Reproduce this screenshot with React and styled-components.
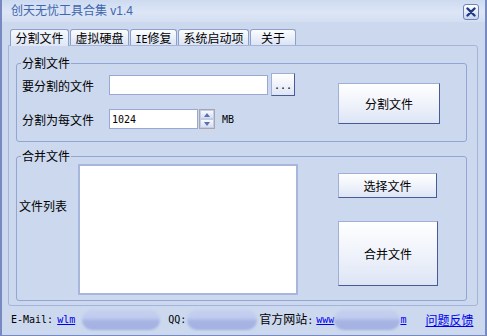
import React from 'react';
import styled, { createGlobalStyle } from 'styled-components';

const GlobalStyle = createGlobalStyle`
  html, body {
    margin: 0;
    padding: 0;
    background: #cbd8ee;
  }
  body {
    font-family: "Noto Sans CJK SC", "Liberation Sans", sans-serif;
    font-size: 12px;
    color: #000;
  }
  * {
    box-sizing: border-box;
  }
`;

const MONO = `"DejaVu Sans Mono", "Liberation Mono", "Noto Sans CJK SC", monospace`;

const Window = styled.div`
  width: 487px;
  height: 336px;
  display: flex;
  flex-direction: column;
  background: #cbd8ee;
  border-left: 2px solid #7689c0;
  border-right: 2px solid #7689c0;
  border-bottom: 1px solid #7689c0;
`;

const TitleBar = styled.div`
  height: 22px;
  display: flex;
  align-items: center;
  justify-content: space-between;
  padding: 0 6px 0 9px;
  background: linear-gradient(to bottom, #cddaf0 0%, #dde6f6 55%, #d3def2 100%);
`;

const Title = styled.div`
  font-family: "Liberation Sans", "Noto Sans CJK SC", sans-serif;
  font-size: 12px;
  line-height: 14px;
  color: #4066ae;
`;

const CloseButton = styled.button`
  width: 16px;
  height: 16px;
  padding: 0;
  margin-top: 2px;
  display: flex;
  align-items: center;
  justify-content: center;
  border: 1px solid #6f82b8;
  border-radius: 3px;
  background: linear-gradient(to bottom, #ffffff 0%, #e4eaf7 50%, #c9d5ee 100%);
`;

const TabStrip = styled.div`
  display: flex;
  align-items: flex-end;
  gap: 1px;
  height: 16px;
  margin-top: 7px;
  padding-left: 8px;
`;

const Tab = styled.div`
  width: ${p => p.$width}px;
  height: ${p => (p.$active ? 17 : 16)}px;
  margin-bottom: ${p => (p.$active ? -1 : 0)}px;
  border: 1px solid #8d9fcb;
  border-bottom: none;
  border-radius: 3px 3px 0 0;
  background: ${p =>
    p.$active
      ? 'linear-gradient(to bottom, #f4f7fc 0%, #dfe7f6 100%)'
      : 'linear-gradient(to bottom, #fbfcfe 0%, #dbe4f4 100%)'};
  text-align: center;
  line-height: 15px;
  font-size: 12px;
  position: relative;
  z-index: ${p => (p.$active ? 1 : 0)};
`;

const Mono = styled.span`
  font-family: ${MONO};
  font-size: 10px;
`;

const Panel = styled.div`
  width: 470px;
  height: 261px;
  margin-left: 6px;
  padding: 17px 0 0 7px;
  display: flex;
  flex-direction: column;
  gap: 14px;
  border: 1px solid #a5b4da;
  border-radius: 0 3px 3px 3px;
  background: #cbd8ee;
`;

const Group = styled.div`
  position: relative;
  width: 451px;
  height: ${p => p.$height}px;
  display: flex;
  align-items: flex-start;
  padding: ${p => p.$pad};
  border: 1px solid #93a6d3;
  border-radius: 3px;
`;

const Legend = styled.span`
  position: absolute;
  top: -8px;
  left: 4px;
  padding: 0 1px;
  line-height: 14px;
  background: #cbd8ee;
`;

const Column = styled.div`
  display: flex;
  flex-direction: column;
  gap: ${p => p.$gap}px;
  margin: ${p => p.$margin};
`;

const Row = styled.div`
  display: flex;
  align-items: center;
  height: ${p => p.$height}px;
`;

const Label = styled.div`
  width: ${p => p.$width}px;
  line-height: 14px;
  padding-top: ${p => p.$top || 0}px;
  flex-shrink: 0;
`;

const TextField = styled.input`
  width: ${p => p.$width}px;
  height: 20px;
  margin: 0;
  padding: 0 2px;
  border: 1px solid #98a8d2;
  background: #fff;
  font-family: ${MONO};
  font-size: 10px;
  color: #000;
  outline: none;
`;

const PushButton = styled.button`
  width: ${p => p.$width}px;
  height: ${p => p.$height}px;
  margin: ${p => p.$margin || 0};
  padding: 0;
  flex-shrink: 0;
  font-family: "Noto Sans CJK SC", sans-serif;
  font-size: 12px;
  line-height: 14px;
  color: #000;
  border: 1px solid;
  border-color: #a1afd6 #4a5a98 #4a5a98 #a1afd6;
  background: linear-gradient(to bottom, #ffffff 0%, #f1f4fb 45%, #dde5f5 100%);
`;

const Spinner = styled.div`
  width: 16px;
  height: 20px;
  margin-left: 1px;
  display: flex;
  flex-direction: column;
  border: 1px solid #aaa4ad;
  background: #fff;
`;

const SpinHalf = styled.div`
  flex: 1;
  display: flex;
  align-items: center;
  justify-content: center;
  border: 1px solid #c3cde8;
  background: linear-gradient(to bottom, #f7f9fd 0%, #d6dff2 100%);
`;

const Unit = styled.span`
  margin-left: 7px;
  font-family: ${MONO};
  font-size: 10px;
`;

const FileList = styled.div`
  width: 220px;
  height: 131px;
  flex-shrink: 0;
  background: #fff;
  border: 2px solid #a7b6dc;
`;

const StatusBar = styled.div`
  flex: 1;
  display: flex;
  align-items: center;
  padding-left: 9px;
  padding-bottom: 1px;
`;

const StatusText = styled.span`
  margin-left: ${p => p.$gap || 0}px;
  font-family: ${p => (p.$mono ? MONO : '"Noto Sans CJK SC", sans-serif')};
  font-size: ${p => (p.$mono ? 10 : 12)}px;
  line-height: 14px;
  white-space: nowrap;
`;

const Link = styled.a`
  margin-left: ${p => p.$gap || 0}px;
  font-family: ${p => (p.$mono ? MONO : '"Noto Sans CJK SC", sans-serif')};
  font-size: ${p => (p.$mono ? 10 : 12)}px;
  line-height: 14px;
  color: #0000f0;
  text-decoration: underline;
  white-space: nowrap;
`;

const Smudge = styled.span`
  display: inline-block;
  width: ${p => p.$width}px;
  height: 20px;
  margin-left: ${p => p.$gap || 0}px;
  border-radius: 10px;
  background: linear-gradient(to bottom, #c5cff0 0%, #c0cbef 40%, #a7b4e3 55%, #a3b1e2 100%);
  filter: blur(0.8px);
`;

const CloseIcon = () => (
  <svg width="10" height="10" viewBox="0 0 10 10">
    <path d="M1.5 1.5 L8.5 8.5 M8.5 1.5 L1.5 8.5" stroke="#1f3a82" strokeWidth="2.4" strokeLinecap="round" />
  </svg>
);

const Arrow = ({ up }) => (
  <svg width="6" height="4" viewBox="0 0 6 4">
    <path d={up ? 'M0 4 L3 0 L6 4 Z' : 'M0 0 L3 4 L6 0 Z'} fill="#5a70a8" />
  </svg>
);

const tabs = [
  { label: '分割文件', width: 59, active: true },
  { label: '虚拟硬盘', width: 59 },
  { label: <><Mono>IE</Mono>修复</>, width: 47 },
  { label: '系统启动项', width: 71 },
  { label: '关于', width: 46 },
];

export default function App() {
  return (
    <>
      <GlobalStyle />
      <Window>
        <TitleBar>
          <Title>创天无忧工具合集 v1.4</Title>
          <CloseButton aria-label="关闭">
            <CloseIcon />
          </CloseButton>
        </TitleBar>

        <TabStrip>
          {tabs.map((t, i) => (
            <Tab key={i} $width={t.width} $active={t.active}>
              {t.label}
            </Tab>
          ))}
        </TabStrip>

        <Panel>
          <Group $height={79} $pad="9px 0 0 5px">
            <Legend>分割文件</Legend>
            <Column $gap={13}>
              <Row $height={23}>
                <Label $width={87} $top={3}>要分割的文件</Label>
                <TextField $width={159} defaultValue="" />
                <PushButton $width={24} $height={23} $margin="0 0 0 3px">
                  <Mono>...</Mono>
                </PushButton>
              </Row>
              <Row $height={20}>
                <Label $width={87} $top={1}>分割为每文件</Label>
                <TextField $width={89} defaultValue="1024" />
                <Spinner>
                  <SpinHalf><Arrow up /></SpinHalf>
                  <SpinHalf><Arrow /></SpinHalf>
                </Spinner>
                <Unit>MB</Unit>
              </Row>
            </Column>
            <PushButton $width={102} $height={41} $margin="10px 0 0 43px">
              分割文件
            </PushButton>
          </Group>

          <Group $height={145} $pad="7px 0 0 2px">
            <Legend>合并文件</Legend>
            <Label $width={59} $top={35}>文件列表</Label>
            <FileList />
            <Column $gap={23} $margin="9px 0 0 40px">
              <PushButton $width={99} $height={25}>选择文件</PushButton>
              <PushButton $width={100} $height={65}>合并文件</PushButton>
            </Column>
          </Group>
        </Panel>

        <StatusBar>
          <StatusText $mono>E-Mail:</StatusText>
          <Link $mono $gap={4}>wlm</Link>
          <Smudge $width={78} $gap={7} />
          <StatusText $mono $gap={8}>QQ:</StatusText>
          <Smudge $width={70} $gap={1} />
          <StatusText $gap={2}>官方网站<Mono>:</Mono></StatusText>
          <Link $mono $gap={3}>www</Link>
          <Smudge $width={66} />
          <Link $mono>m</Link>
          <Link $gap={19}>问题反馈</Link>
        </StatusBar>
      </Window>
    </>
  );
}
